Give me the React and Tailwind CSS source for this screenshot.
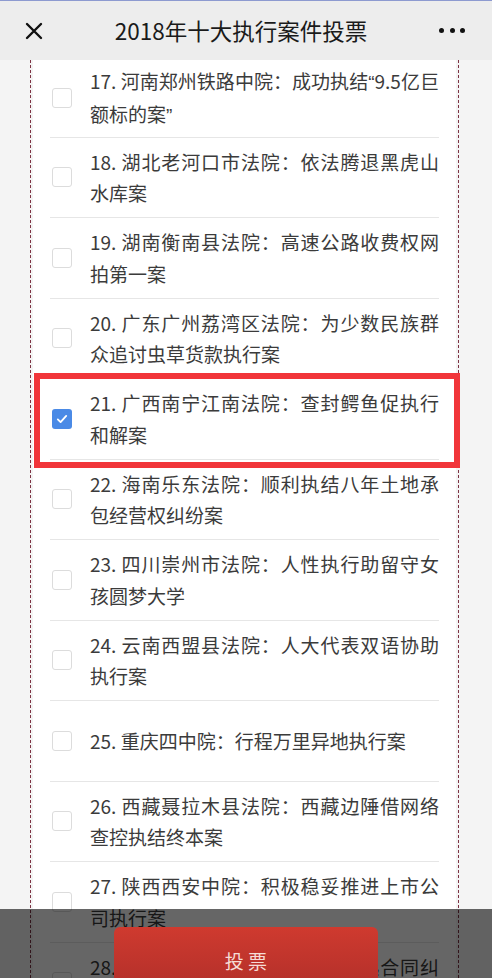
import React from 'react';

// Vote list items — each entry is the lines as they wrap on screen
const Q = ({ children }) => <span className="font-['Liberation_Sans',sans-serif]">{children}</span>;

const cases = [
  { id: 17, lines: [<>17. 河南郑州铁路中院：成功执结<Q>“</Q>9.5亿巨</>, <>额标的案<Q>”</Q></>] },
  { id: 18, lines: ['18. 湖北老河口市法院：依法腾退黑虎山', '水库案'] },
  { id: 19, lines: ['19. 湖南衡南县法院：高速公路收费权网', '拍第一案'] },
  { id: 20, lines: ['20. 广东广州荔湾区法院：为少数民族群', '众追讨虫草货款执行案'] },
  { id: 21, lines: ['21. 广西南宁江南法院：查封鳄鱼促执行', '和解案'], checked: true },
  { id: 22, lines: ['22. 海南乐东法院：顺利执结八年土地承', '包经营权纠纷案'] },
  { id: 23, lines: ['23. 四川崇州市法院：人性执行助留守女', '孩圆梦大学'] },
  { id: 24, lines: ['24. 云南西盟县法院：人大代表双语协助', '执行案'] },
  { id: 25, lines: ['25. 重庆四中院：行程万里异地执行案'] },
  { id: 26, lines: ['26. 西藏聂拉木县法院：西藏边陲借网络', '查控执结终本案'] },
  { id: 27, lines: ['27. 陕西西安中院：积极稳妥推进上市公', '司执行案'] },
  { id: 28, lines: ['28. 吉林通化中院：依法执结一起合同纠', '纷案'] },
];

const Checkbox = ({ checked }) =>
  checked ? (
    <span className="ml-[2px] flex h-[20px] w-[20px] shrink-0 items-center justify-center rounded-[3px] bg-[#4a8ae6]">
      <svg viewBox="0 0 20 20" className="h-[14px] w-[14px]" fill="none" stroke="#fff" strokeWidth="2.6" strokeLinecap="round" strokeLinejoin="round">
        <path d="M4 10.5l4 4 8-9" />
      </svg>
    </span>
  ) : (
    <span className="ml-[2px] h-[20px] w-[20px] shrink-0 rounded-[3px] border border-[#dcdcdc] bg-white" />
  );

const CaseRow = ({ item, first }) => (
  <div
    className={`flex items-center border-b border-[#e6e6e6] ${first ? 'h-[77.5px]' : 'h-[80.5px]'}`}
  >
    <Checkbox checked={item.checked} />
    <div className="ml-[18px] min-w-0 flex-1 text-[19px] leading-[31.75px] text-[#3b3b3b]">
      {item.lines.map((line, i) => (
        <div
          key={i}
          className={
            item.lines.length > 1 && i === 0
              ? 'whitespace-nowrap text-justify [text-align-last:justify]'
              : 'whitespace-nowrap'
          }
        >
          {line}
        </div>
      ))}
    </div>
  </div>
);

export default function App() {
  return (
    <div
      className="relative h-[978px] w-[492px] overflow-hidden bg-[#f4f4f4]"
      style={{ fontFamily: '"Noto Sans CJK SC", "Noto Sans", sans-serif' }}
    >
      {/* Top nav */}
      <header className="relative z-10 flex h-[60px] items-center border-t border-[#8d9ad0] bg-[#ededed] px-[25px]">
        <svg viewBox="0 0 18 18" className="h-[18px] w-[18px]" fill="none" stroke="#111" strokeWidth="2.4" strokeLinecap="round">
          <path d="M2 2l14 14M16 2L2 16" />
        </svg>
        <h1 className="flex-1 text-center text-[22.5px] font-normal text-[#1a1a1a]">2018年十大执行案件投票</h1>
        <div className="flex items-center gap-[5.5px] pr-[2px]">
          <span className="h-[5px] w-[5px] rounded-full bg-[#111]" />
          <span className="h-[5px] w-[5px] rounded-full bg-[#111]" />
          <span className="h-[5px] w-[5px] rounded-full bg-[#111]" />
        </div>
      </header>

      {/* List panel with dashed edges */}
      <div className="ml-[30px] mr-[33px] h-[918px] border-x border-dashed border-[#7d3344] px-[2px]">
        <div className="h-full bg-white px-[17px]">
          {cases.map((c, i) => (
            <CaseRow key={c.id} item={c} first={i === 0} />
          ))}
        </div>
      </div>

      {/* Selection highlight */}
      <div className="pointer-events-none absolute left-[34px] top-[373px] h-[95px] w-[426px] border-[6px] border-[#f1353a]" />

      {/* Bottom vote bar */}
      <div className="absolute inset-x-0 bottom-0 flex h-[69px] justify-center bg-black/60 pt-[18px]">
        <button className="h-[60px] w-[264px] rounded-[6px] bg-gradient-to-b from-[#cf3a2f] to-[#b3302a] pt-[8px] text-[19px] leading-[30px] text-[#f6dcd6]">
          <span className="block leading-[30px]">投 票</span>
        </button>
      </div>
    </div>
  );
}
